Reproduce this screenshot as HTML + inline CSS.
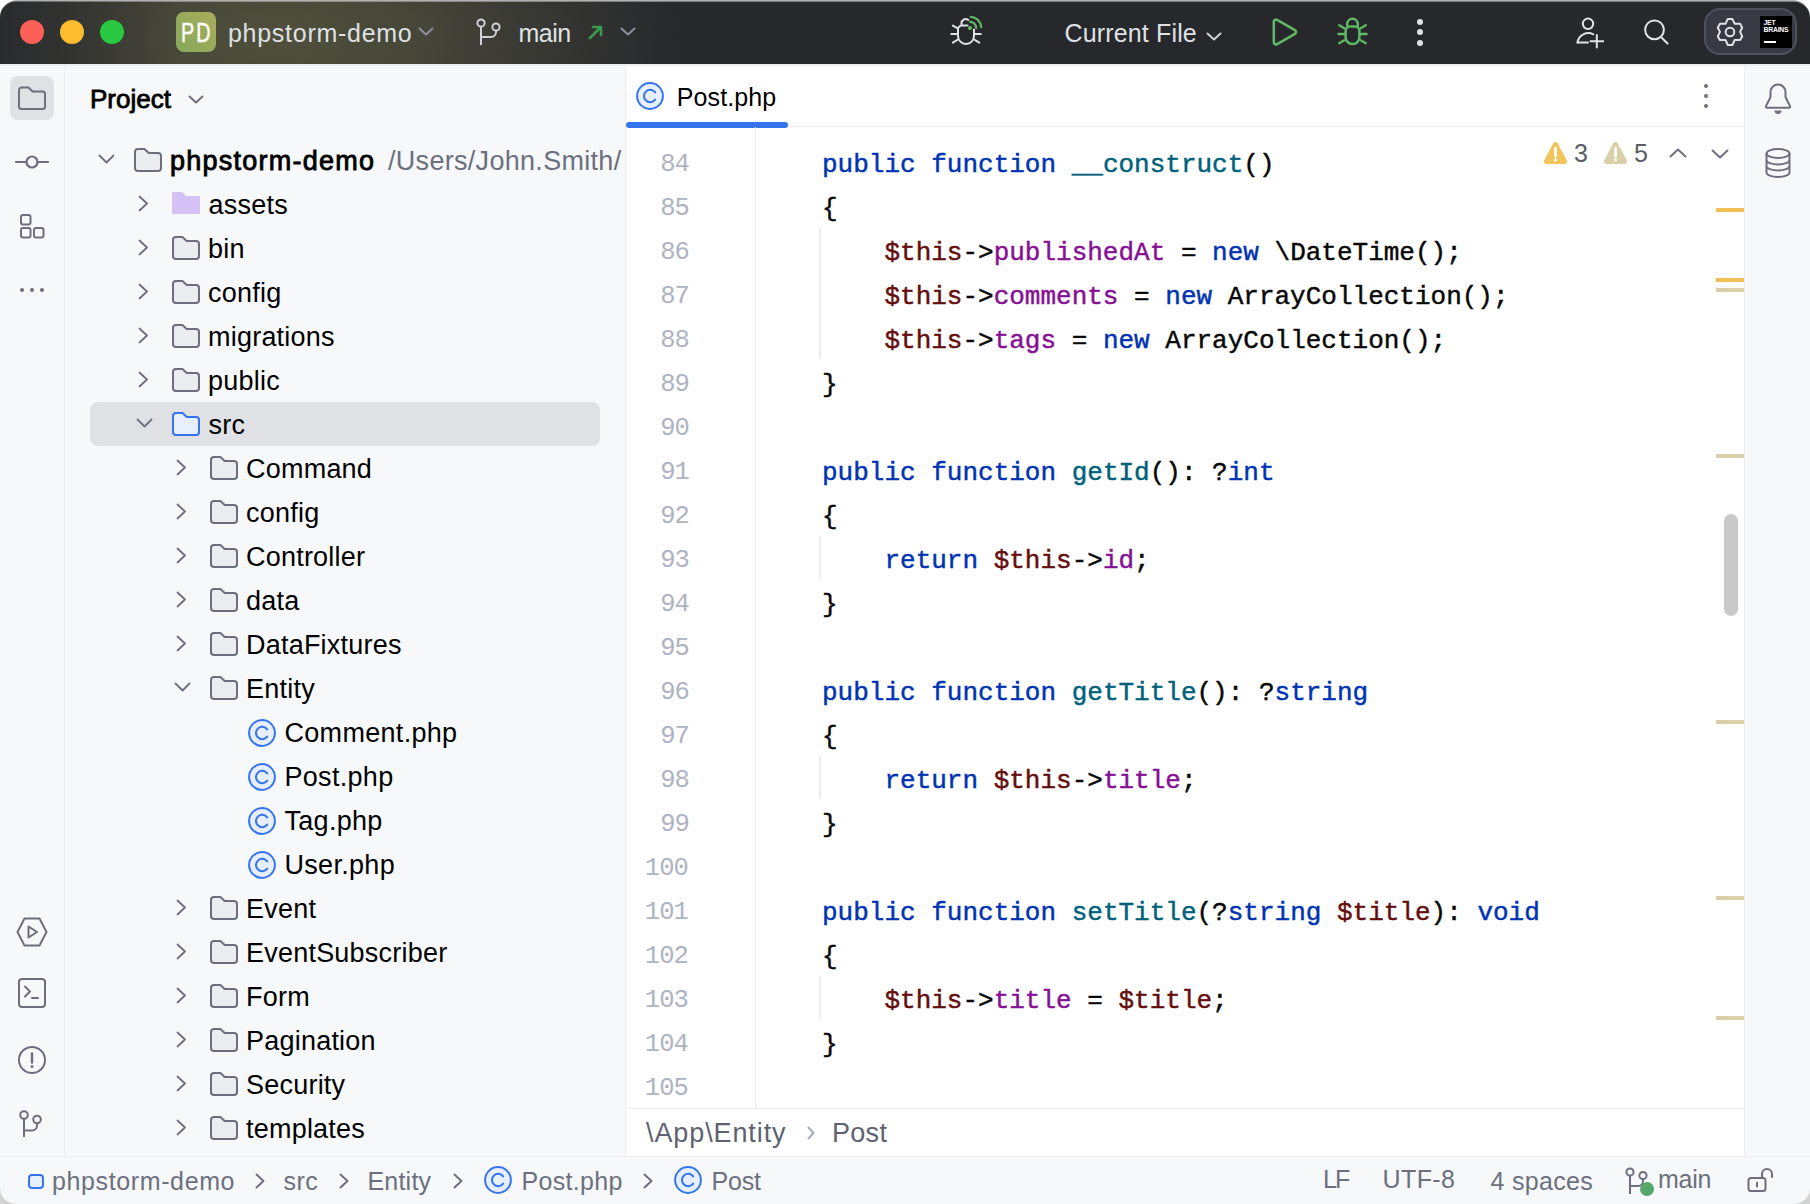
<!DOCTYPE html><html><head><meta charset="utf-8"><style>
html,body{margin:0;padding:0;}
body{width:1810px;height:1204px;overflow:hidden;position:relative;background:#c9c9c9;font-family:"Liberation Sans",sans-serif;}
.t{position:absolute;white-space:pre;line-height:1;}
.i{position:absolute;overflow:visible;}
.b{position:absolute;}
</style></head><body>
<div class="b" style="left:0;top:0;width:1810px;height:600px;background:#ffffff"></div>
<div class="b" style="left:0;top:600px;width:1810px;height:604px;background:#d3d3d3"></div>
<div class="b" style="left:0;top:0.3px;width:1810px;height:1203.7px;border-radius:17px;background:#b0b0b0"></div>
<div class="b" style="left:0;top:0;width:1810px;height:1204px;clip-path:inset(1.5px 0 0 0 round 16px);background:#f7f8fa">
<div class="b" style="left:0;top:0;width:1810px;height:64px;background:linear-gradient(90deg, rgba(39,40,44,0.75) 0px, rgba(39,40,44,0) 180px),radial-gradient(ellipse 400px 190px at 280px 38px, #4f4f3b 0%, #48483a 30%, #27282c 100%);"></div>
<div class="b" style="left:0;top:0;width:1810px;height:1px;background:#8a8b8d"></div>
<div class="b" style="left:20px;top:20px;width:24px;height:24px;border-radius:50%;background:#fe5f57"></div>
<div class="b" style="left:60px;top:20px;width:24px;height:24px;border-radius:50%;background:#febc2e"></div>
<div class="b" style="left:100px;top:20px;width:24px;height:24px;border-radius:50%;background:#28c840"></div>
<div class="b" style="left:176px;top:12px;width:40px;height:40px;border-radius:8px;background:linear-gradient(45deg,#86a95a,#a9ac5c)"></div>
<div class="t" style="left:181.2px;top:18.72px;font-size:27.5px;color:#ffffff;font-weight:normal;font-family:'Liberation Sans';letter-spacing:3px;transform:scaleX(0.72);transform-origin:0 0;-webkit-text-stroke:0.5px #fff;">PD</div>
<div class="t" style="left:228px;top:20.84px;font-size:25px;color:#dfe1e5;font-weight:normal;font-family:'Liberation Sans';letter-spacing:0.72px;">phpstorm-demo</div>
<svg class="i" style="left:418px;top:27px" width="16" height="9" viewBox="0 0 16 9" fill="none"><path d="M1.5 1.5L8.0 7.5L14.5 1.5" stroke="#8b8fa0" stroke-width="2" stroke-linecap="round" stroke-linejoin="round"/></svg>
<svg class="i" style="left:476px;top:18px" width="26" height="28" viewBox="0 0 26 28" fill="none"><circle cx="5" cy="5" r="3.6" stroke="#ced0d6" stroke-width="2"/><circle cx="20" cy="9" r="3.6" stroke="#ced0d6" stroke-width="2"/><path d="M5 8.6V27M5 19h10a5 5 0 0 0 5-5v-1.4" stroke="#ced0d6" stroke-width="2"/></svg>
<div class="t" style="left:518.5px;top:20.84px;font-size:25px;color:#dfe1e5;font-weight:normal;font-family:'Liberation Sans';letter-spacing:-0.5px;">main</div>
<svg class="i" style="left:588px;top:24px" width="16" height="16" viewBox="0 0 16 16" fill="none"><path d="M2 14L13 3M5 3h8v8" stroke="#3a9b50" stroke-width="2.6" stroke-linecap="round" stroke-linejoin="round"/></svg>
<svg class="i" style="left:620px;top:27px" width="16" height="9" viewBox="0 0 16 9" fill="none"><path d="M1.5 1.5L8.0 7.5L14.5 1.5" stroke="#8b8fa0" stroke-width="2" stroke-linecap="round" stroke-linejoin="round"/></svg>
<svg class="i" style="left:945px;top:12px" width="42" height="38" viewBox="945 12 42 38" fill="none"><path d="M974 29.5V36a8 8 0 0 1-16 0v-6a4 4 0 0 1 4-4.5h5.5" stroke="#dfe1e5" stroke-width="2" stroke-linecap="round"/><path d="M968.3 20a4.2 4.2 0 0 0-6.6 4.6" stroke="#dfe1e5" stroke-width="2" stroke-linecap="round"/><path d="M952.8 25.6l5 2.8M951.2 34h6M952.8 42.6l5-2.9M980.8 34h-6M979.3 42.6l-5-2.9" stroke="#dfe1e5" stroke-width="2" stroke-linecap="round"/><path d="M970 21.8a6.2 6.2 0 0 1 6.2 6.2M970.8 16.8a11.2 11.2 0 0 1 10.4 10.4" stroke="#5fb865" stroke-width="2.2" stroke-linecap="round"/><circle cx="970" cy="28" r="2.1" fill="#5fb865"/></svg>
<div class="t" style="left:1064.5px;top:21.34px;font-size:25px;color:#dfe1e5;font-weight:normal;font-family:'Liberation Sans';letter-spacing:0.15px;">Current File</div>
<svg class="i" style="left:1206px;top:32px" width="16" height="9" viewBox="0 0 16 9" fill="none"><path d="M1.5 1.5L8.0 7.5L14.5 1.5" stroke="#ced0d6" stroke-width="2" stroke-linecap="round" stroke-linejoin="round"/></svg>
<svg class="i" style="left:1268px;top:14px" width="34" height="36" viewBox="1268 14 34 36" fill="none"><path d="M1273.8 21.8v20.4a2.2 2.2 0 0 0 3.3 1.9l17.8-10.2a2.2 2.2 0 0 0 0-3.8l-17.8-10.2a2.2 2.2 0 0 0-3.3 1.9z" stroke="#5fb865" stroke-width="2.6" stroke-linejoin="round"/></svg>
<svg class="i" style="left:1334px;top:14px" width="36" height="36" viewBox="1334 14 36 36" fill="none"><path d="M1345.6 31a4.6 4.6 0 0 1 4.6-4.6h4.6a4.6 4.6 0 0 1 4.6 4.6v6.2a6.9 6.9 0 0 1-13.8 0z" stroke="#5fb865" stroke-width="2.5"/><path d="M1347.2 26.4v-2.3a5.3 5.3 0 0 1 10.6 0v2.3" stroke="#5fb865" stroke-width="2.5"/><path d="M1339.2 25.2l5.2 3M1338.4 34h6M1339.2 43.2l5.2-3M1365.8 25.2l-5.2 3M1366.6 34h-6M1365.8 43.2l-5.2-3" stroke="#5fb865" stroke-width="2.4" stroke-linecap="round"/></svg>
<div class="b" style="left:1417px;top:18.5px;width:6px;height:6px;border-radius:50%;background:#dfe1e5"></div>
<div class="b" style="left:1417px;top:29.200000000000003px;width:6px;height:6px;border-radius:50%;background:#dfe1e5"></div>
<div class="b" style="left:1417px;top:40px;width:6px;height:6px;border-radius:50%;background:#dfe1e5"></div>
<svg class="i" style="left:1570px;top:12px" width="40" height="42" viewBox="1570 12 40 42" fill="none"><circle cx="1588" cy="23.8" r="5.2" stroke="#dfe1e5" stroke-width="2"/><path d="M1577.5 42.5a11 11 0 0 1 15.8-8.2" stroke="#dfe1e5" stroke-width="2" stroke-linecap="round"/><path d="M1577.5 42.5h10.5M1596.8 35v12.5M1590.5 41.2h12.7" stroke="#dfe1e5" stroke-width="2" stroke-linecap="round"/></svg>
<svg class="i" style="left:1638px;top:14px" width="36" height="36" viewBox="1638 14 36 36" fill="none"><circle cx="1654.5" cy="29.8" r="9.4" stroke="#dfe1e5" stroke-width="2"/><path d="M1661 37l6.5 6.5" stroke="#dfe1e5" stroke-width="2" stroke-linecap="round"/></svg>
<div class="b" style="left:1704px;top:8px;width:89px;height:43px;border-radius:16px;background:#373a42;border:2px solid #4e5160"></div>
<svg class="i" style="left:1712px;top:14px" width="36" height="36" viewBox="1712 14 36 36" fill="none"><path d="M1727.85 18.93h4.48l2.4 4.94h5.37l2.1 3.59-2.1 4.48 2.1 4.49-2.1 3.59h-5.37l-2.4 4.93h-4.48l-2.39-4.93h-5.54l-2.09-3.59 2.09-4.49-2.09-4.48 2.09-3.59h5.54z" stroke="#dfe1e5" stroke-width="2" stroke-linejoin="round"/><circle cx="1730" cy="31.94" r="4.3" stroke="#dfe1e5" stroke-width="2"/></svg>
<div class="b" style="left:1760px;top:16px;width:32px;height:32px;background:#000"></div>
<div class="t" style="left:1763.5px;top:20.04px;font-size:6.8px;color:#fff;font-weight:bold;font-family:'Liberation Sans';letter-spacing:-0.2px;">JET</div>
<div class="t" style="left:1763.5px;top:27.24px;font-size:6.8px;color:#fff;font-weight:bold;font-family:'Liberation Sans';letter-spacing:-0.2px;">BRAINS</div>
<div class="b" style="left:1764px;top:41px;width:12px;height:2.2px;background:#fff"></div>
<div class="b" style="left:64px;top:64px;width:1px;height:1093px;background:#ebecf0"></div>
<div class="b" style="left:625px;top:64px;width:1px;height:1093px;background:#ebecf0"></div>
<div class="b" style="left:626px;top:64px;width:1118px;height:1093px;background:#ffffff"></div>
<div class="b" style="left:0;top:64px;width:1810px;height:1.5px;background:#ebecf0"></div>
<div class="b" style="left:1744px;top:64px;width:1px;height:1093px;background:#ebecf0"></div>
<div class="b" style="left:0;top:1156px;width:1810px;height:1px;background:#ebecf0"></div>
<div class="b" style="left:10px;top:76px;width:44px;height:44px;border-radius:8px;background:#dfe1e5"></div>
<svg class="i" style="left:18px;top:86px" width="28" height="24" viewBox="0 0 28 24" fill="none"><path d="M1 4a2.5 2.5 0 0 1 2.5-2.5h7l4 4H24.5A2.5 2.5 0 0 1 27 8v12.5a2.5 2.5 0 0 1-2.5 2.5h-21A2.5 2.5 0 0 1 1 20.5z" stroke="#6c707e" stroke-width="2" stroke-linejoin="round"/></svg>
<svg class="i" style="left:15px;top:155px" width="34" height="14" viewBox="0 0 34 14" fill="none"><path d="M1 7h9.5M22.5 7H33" stroke="#6c707e" stroke-width="2.2" stroke-linecap="round"/><circle cx="17" cy="7" r="5.5" stroke="#6c707e" stroke-width="2.2"/></svg>
<svg class="i" style="left:19px;top:213px" width="27" height="27" viewBox="0 0 27 27" fill="none"><rect x="2" y="2" width="9.5" height="9.5" rx="2" stroke="#6c707e" stroke-width="2"/><rect x="2" y="15" width="9.5" height="9.5" rx="2" stroke="#6c707e" stroke-width="2"/><rect x="15" y="15" width="9.5" height="9.5" rx="2" stroke="#6c707e" stroke-width="2"/></svg>
<div class="b" style="left:19.8px;top:287.8px;width:4.4px;height:4.4px;border-radius:50%;background:#6c707e"></div>
<div class="b" style="left:29.8px;top:287.8px;width:4.4px;height:4.4px;border-radius:50%;background:#6c707e"></div>
<div class="b" style="left:39.8px;top:287.8px;width:4.4px;height:4.4px;border-radius:50%;background:#6c707e"></div>
<svg class="i" style="left:16px;top:917px" width="32" height="30" viewBox="0 0 32 30" fill="none"><path d="M8.5 1.5h15l7 13.5-7 13.5h-15L1.5 15z" stroke="#6c707e" stroke-width="2" stroke-linejoin="round"/><path d="M12.5 9.5v11l8.5-5.5z" stroke="#6c707e" stroke-width="2" stroke-linejoin="round"/></svg>
<svg class="i" style="left:18px;top:978px" width="28" height="30" viewBox="0 0 28 30" fill="none"><rect x="1" y="1" width="26" height="28" rx="3" stroke="#6c707e" stroke-width="2"/><path d="M7 8.5l5 5-5 5M14 20h6" stroke="#6c707e" stroke-width="2" stroke-linecap="round" stroke-linejoin="round"/></svg>
<svg class="i" style="left:18px;top:1046px" width="28" height="28" viewBox="0 0 28 28" fill="none"><circle cx="14" cy="14" r="13" stroke="#6c707e" stroke-width="2"/><path d="M14 7.5v9" stroke="#6c707e" stroke-width="2.4" stroke-linecap="round"/><circle cx="14" cy="20.5" r="1.5" fill="#6c707e"/></svg>
<svg class="i" style="left:19px;top:1110px" width="24" height="28" viewBox="0 0 24 28" fill="none"><circle cx="5" cy="5" r="3.8" stroke="#6c707e" stroke-width="2"/><circle cx="18" cy="9.5" r="3.8" stroke="#6c707e" stroke-width="2"/><path d="M5 8.8V27M5 20.5h8a5 5 0 0 0 5-5v-2.2" stroke="#6c707e" stroke-width="2"/></svg>
<div class="t" style="left:90px;top:85.99px;font-size:26px;color:#000000;font-weight:normal;font-family:'Liberation Sans';-webkit-text-stroke:0.8px #000;">Project</div>
<svg class="i" style="left:188px;top:95px" width="16" height="9" viewBox="0 0 16 9" fill="none"><path d="M1.5 1.5L8.0 7.5L14.5 1.5" stroke="#6c707e" stroke-width="2" stroke-linecap="round" stroke-linejoin="round"/></svg>
<div class="b" style="left:90px;top:402px;width:510px;height:44px;border-radius:8px;background:#dfe1e5"></div>
<svg class="i" style="left:98px;top:154px" width="17" height="10" viewBox="0 0 17 10" fill="none"><path d="M1.5 1.5L8.5 8.5L15.5 1.5" stroke="#6c707e" stroke-width="1.8" stroke-linecap="round" stroke-linejoin="round"/></svg>
<svg class="i" style="left:134px;top:148px" width="28" height="24" viewBox="0 0 28 24" fill="none"><path d="M1 4a3 3 0 0 1 3-3h6.5l4.2 4H24a3 3 0 0 1 3 3v12a3 3 0 0 1-3 3H4a3 3 0 0 1-3-3z" fill="#ebecf0" stroke="#6c707e" stroke-width="2" stroke-linejoin="round"/></svg>
<div class="t" style="left:170px;top:147.94px;font-size:27px;color:#000;font-weight:normal;font-family:'Liberation Sans';letter-spacing:1.25px;-webkit-text-stroke:0.85px #000;">phpstorm-demo</div>
<div class="t" style="left:388px;top:147.94px;font-size:27px;color:#6c707e;font-weight:normal;font-family:'Liberation Sans';letter-spacing:0.3px;">/Users/John.Smith/</div>
<svg class="i" style="left:138px;top:195px" width="11" height="17" viewBox="0 0 11 17" fill="none"><path d="M1.5 1.5L9 8.5L1.5 15.5" stroke="#6c707e" stroke-width="1.8" stroke-linecap="round" stroke-linejoin="round"/></svg>
<svg class="i" style="left:172px;top:192px" width="28" height="22" viewBox="0 0 28 22" fill="none"><path d="M0 0h10l4 4h14v18H0z" fill="#d4c2f6"/></svg>
<div class="t" style="left:208.5px;top:191.94px;font-size:27px;color:#000;font-weight:normal;font-family:'Liberation Sans';letter-spacing:0.22px;">assets</div>
<svg class="i" style="left:138px;top:239px" width="11" height="17" viewBox="0 0 11 17" fill="none"><path d="M1.5 1.5L9 8.5L1.5 15.5" stroke="#6c707e" stroke-width="1.8" stroke-linecap="round" stroke-linejoin="round"/></svg>
<svg class="i" style="left:172px;top:236px" width="28" height="24" viewBox="0 0 28 24" fill="none"><path d="M1 4a3 3 0 0 1 3-3h6.5l4.2 4H24a3 3 0 0 1 3 3v12a3 3 0 0 1-3 3H4a3 3 0 0 1-3-3z" fill="#ebecf0" stroke="#6c707e" stroke-width="2" stroke-linejoin="round"/></svg>
<div class="t" style="left:208px;top:235.94px;font-size:27px;color:#000;font-weight:normal;font-family:'Liberation Sans';letter-spacing:0.22px;">bin</div>
<svg class="i" style="left:138px;top:283px" width="11" height="17" viewBox="0 0 11 17" fill="none"><path d="M1.5 1.5L9 8.5L1.5 15.5" stroke="#6c707e" stroke-width="1.8" stroke-linecap="round" stroke-linejoin="round"/></svg>
<svg class="i" style="left:172px;top:280px" width="28" height="24" viewBox="0 0 28 24" fill="none"><path d="M1 4a3 3 0 0 1 3-3h6.5l4.2 4H24a3 3 0 0 1 3 3v12a3 3 0 0 1-3 3H4a3 3 0 0 1-3-3z" fill="#ebecf0" stroke="#6c707e" stroke-width="2" stroke-linejoin="round"/></svg>
<div class="t" style="left:208px;top:279.94px;font-size:27px;color:#000;font-weight:normal;font-family:'Liberation Sans';letter-spacing:0.22px;">config</div>
<svg class="i" style="left:138px;top:327px" width="11" height="17" viewBox="0 0 11 17" fill="none"><path d="M1.5 1.5L9 8.5L1.5 15.5" stroke="#6c707e" stroke-width="1.8" stroke-linecap="round" stroke-linejoin="round"/></svg>
<svg class="i" style="left:172px;top:324px" width="28" height="24" viewBox="0 0 28 24" fill="none"><path d="M1 4a3 3 0 0 1 3-3h6.5l4.2 4H24a3 3 0 0 1 3 3v12a3 3 0 0 1-3 3H4a3 3 0 0 1-3-3z" fill="#ebecf0" stroke="#6c707e" stroke-width="2" stroke-linejoin="round"/></svg>
<div class="t" style="left:208px;top:323.94px;font-size:27px;color:#000;font-weight:normal;font-family:'Liberation Sans';letter-spacing:0.22px;">migrations</div>
<svg class="i" style="left:138px;top:371px" width="11" height="17" viewBox="0 0 11 17" fill="none"><path d="M1.5 1.5L9 8.5L1.5 15.5" stroke="#6c707e" stroke-width="1.8" stroke-linecap="round" stroke-linejoin="round"/></svg>
<svg class="i" style="left:172px;top:368px" width="28" height="24" viewBox="0 0 28 24" fill="none"><path d="M1 4a3 3 0 0 1 3-3h6.5l4.2 4H24a3 3 0 0 1 3 3v12a3 3 0 0 1-3 3H4a3 3 0 0 1-3-3z" fill="#ebecf0" stroke="#6c707e" stroke-width="2" stroke-linejoin="round"/></svg>
<div class="t" style="left:208px;top:367.94px;font-size:27px;color:#000;font-weight:normal;font-family:'Liberation Sans';letter-spacing:0.22px;">public</div>
<svg class="i" style="left:136px;top:418px" width="17" height="10" viewBox="0 0 17 10" fill="none"><path d="M1.5 1.5L8.5 8.5L15.5 1.5" stroke="#6c707e" stroke-width="1.8" stroke-linecap="round" stroke-linejoin="round"/></svg>
<svg class="i" style="left:172px;top:412px" width="28" height="24" viewBox="0 0 28 24" fill="none"><path d="M1 4a3 3 0 0 1 3-3h6.5l4.2 4H24a3 3 0 0 1 3 3v12a3 3 0 0 1-3 3H4a3 3 0 0 1-3-3z" fill="#e7effd" stroke="#3574f0" stroke-width="2" stroke-linejoin="round"/></svg>
<div class="t" style="left:208.5px;top:411.94px;font-size:27px;color:#000;font-weight:normal;font-family:'Liberation Sans';letter-spacing:0.22px;">src</div>
<svg class="i" style="left:176px;top:459px" width="11" height="17" viewBox="0 0 11 17" fill="none"><path d="M1.5 1.5L9 8.5L1.5 15.5" stroke="#6c707e" stroke-width="1.8" stroke-linecap="round" stroke-linejoin="round"/></svg>
<svg class="i" style="left:210px;top:456px" width="28" height="24" viewBox="0 0 28 24" fill="none"><path d="M1 4a3 3 0 0 1 3-3h6.5l4.2 4H24a3 3 0 0 1 3 3v12a3 3 0 0 1-3 3H4a3 3 0 0 1-3-3z" fill="#ebecf0" stroke="#6c707e" stroke-width="2" stroke-linejoin="round"/></svg>
<div class="t" style="left:246px;top:455.94px;font-size:27px;color:#000;font-weight:normal;font-family:'Liberation Sans';letter-spacing:0.22px;">Command</div>
<svg class="i" style="left:176px;top:503px" width="11" height="17" viewBox="0 0 11 17" fill="none"><path d="M1.5 1.5L9 8.5L1.5 15.5" stroke="#6c707e" stroke-width="1.8" stroke-linecap="round" stroke-linejoin="round"/></svg>
<svg class="i" style="left:210px;top:500px" width="28" height="24" viewBox="0 0 28 24" fill="none"><path d="M1 4a3 3 0 0 1 3-3h6.5l4.2 4H24a3 3 0 0 1 3 3v12a3 3 0 0 1-3 3H4a3 3 0 0 1-3-3z" fill="#ebecf0" stroke="#6c707e" stroke-width="2" stroke-linejoin="round"/></svg>
<div class="t" style="left:246px;top:499.94px;font-size:27px;color:#000;font-weight:normal;font-family:'Liberation Sans';letter-spacing:0.22px;">config</div>
<svg class="i" style="left:176px;top:547px" width="11" height="17" viewBox="0 0 11 17" fill="none"><path d="M1.5 1.5L9 8.5L1.5 15.5" stroke="#6c707e" stroke-width="1.8" stroke-linecap="round" stroke-linejoin="round"/></svg>
<svg class="i" style="left:210px;top:544px" width="28" height="24" viewBox="0 0 28 24" fill="none"><path d="M1 4a3 3 0 0 1 3-3h6.5l4.2 4H24a3 3 0 0 1 3 3v12a3 3 0 0 1-3 3H4a3 3 0 0 1-3-3z" fill="#ebecf0" stroke="#6c707e" stroke-width="2" stroke-linejoin="round"/></svg>
<div class="t" style="left:246px;top:543.94px;font-size:27px;color:#000;font-weight:normal;font-family:'Liberation Sans';letter-spacing:0.22px;">Controller</div>
<svg class="i" style="left:176px;top:591px" width="11" height="17" viewBox="0 0 11 17" fill="none"><path d="M1.5 1.5L9 8.5L1.5 15.5" stroke="#6c707e" stroke-width="1.8" stroke-linecap="round" stroke-linejoin="round"/></svg>
<svg class="i" style="left:210px;top:588px" width="28" height="24" viewBox="0 0 28 24" fill="none"><path d="M1 4a3 3 0 0 1 3-3h6.5l4.2 4H24a3 3 0 0 1 3 3v12a3 3 0 0 1-3 3H4a3 3 0 0 1-3-3z" fill="#ebecf0" stroke="#6c707e" stroke-width="2" stroke-linejoin="round"/></svg>
<div class="t" style="left:246px;top:587.94px;font-size:27px;color:#000;font-weight:normal;font-family:'Liberation Sans';letter-spacing:0.22px;">data</div>
<svg class="i" style="left:176px;top:635px" width="11" height="17" viewBox="0 0 11 17" fill="none"><path d="M1.5 1.5L9 8.5L1.5 15.5" stroke="#6c707e" stroke-width="1.8" stroke-linecap="round" stroke-linejoin="round"/></svg>
<svg class="i" style="left:210px;top:632px" width="28" height="24" viewBox="0 0 28 24" fill="none"><path d="M1 4a3 3 0 0 1 3-3h6.5l4.2 4H24a3 3 0 0 1 3 3v12a3 3 0 0 1-3 3H4a3 3 0 0 1-3-3z" fill="#ebecf0" stroke="#6c707e" stroke-width="2" stroke-linejoin="round"/></svg>
<div class="t" style="left:246px;top:631.94px;font-size:27px;color:#000;font-weight:normal;font-family:'Liberation Sans';letter-spacing:0.22px;">DataFixtures</div>
<svg class="i" style="left:174px;top:682px" width="17" height="10" viewBox="0 0 17 10" fill="none"><path d="M1.5 1.5L8.5 8.5L15.5 1.5" stroke="#6c707e" stroke-width="1.8" stroke-linecap="round" stroke-linejoin="round"/></svg>
<svg class="i" style="left:210px;top:676px" width="28" height="24" viewBox="0 0 28 24" fill="none"><path d="M1 4a3 3 0 0 1 3-3h6.5l4.2 4H24a3 3 0 0 1 3 3v12a3 3 0 0 1-3 3H4a3 3 0 0 1-3-3z" fill="#ebecf0" stroke="#6c707e" stroke-width="2" stroke-linejoin="round"/></svg>
<div class="t" style="left:246px;top:675.94px;font-size:27px;color:#000;font-weight:normal;font-family:'Liberation Sans';letter-spacing:0.22px;">Entity</div>
<svg class="i" style="left:248px;top:719px" width="28" height="28" viewBox="0 0 28 28" fill="none"><circle cx="14" cy="14" r="12.9" fill="#e7effd" stroke="#3574f0" stroke-width="2"/><path d="M19.2 10.4A6.2 6.2 0 1 0 19.2 17.6" stroke="#3574f0" stroke-width="2" stroke-linecap="round"/></svg>
<div class="t" style="left:284.5px;top:719.94px;font-size:27px;color:#000;font-weight:normal;font-family:'Liberation Sans';letter-spacing:0.3px;">Comment.php</div>
<svg class="i" style="left:248px;top:763px" width="28" height="28" viewBox="0 0 28 28" fill="none"><circle cx="14" cy="14" r="12.9" fill="#e7effd" stroke="#3574f0" stroke-width="2"/><path d="M19.2 10.4A6.2 6.2 0 1 0 19.2 17.6" stroke="#3574f0" stroke-width="2" stroke-linecap="round"/></svg>
<div class="t" style="left:284.5px;top:763.94px;font-size:27px;color:#000;font-weight:normal;font-family:'Liberation Sans';letter-spacing:0.3px;">Post.php</div>
<svg class="i" style="left:248px;top:807px" width="28" height="28" viewBox="0 0 28 28" fill="none"><circle cx="14" cy="14" r="12.9" fill="#e7effd" stroke="#3574f0" stroke-width="2"/><path d="M19.2 10.4A6.2 6.2 0 1 0 19.2 17.6" stroke="#3574f0" stroke-width="2" stroke-linecap="round"/></svg>
<div class="t" style="left:284.5px;top:807.94px;font-size:27px;color:#000;font-weight:normal;font-family:'Liberation Sans';letter-spacing:0.3px;">Tag.php</div>
<svg class="i" style="left:248px;top:851px" width="28" height="28" viewBox="0 0 28 28" fill="none"><circle cx="14" cy="14" r="12.9" fill="#e7effd" stroke="#3574f0" stroke-width="2"/><path d="M19.2 10.4A6.2 6.2 0 1 0 19.2 17.6" stroke="#3574f0" stroke-width="2" stroke-linecap="round"/></svg>
<div class="t" style="left:284.5px;top:851.94px;font-size:27px;color:#000;font-weight:normal;font-family:'Liberation Sans';letter-spacing:0.3px;">User.php</div>
<svg class="i" style="left:176px;top:899px" width="11" height="17" viewBox="0 0 11 17" fill="none"><path d="M1.5 1.5L9 8.5L1.5 15.5" stroke="#6c707e" stroke-width="1.8" stroke-linecap="round" stroke-linejoin="round"/></svg>
<svg class="i" style="left:210px;top:896px" width="28" height="24" viewBox="0 0 28 24" fill="none"><path d="M1 4a3 3 0 0 1 3-3h6.5l4.2 4H24a3 3 0 0 1 3 3v12a3 3 0 0 1-3 3H4a3 3 0 0 1-3-3z" fill="#ebecf0" stroke="#6c707e" stroke-width="2" stroke-linejoin="round"/></svg>
<div class="t" style="left:246px;top:895.94px;font-size:27px;color:#000;font-weight:normal;font-family:'Liberation Sans';letter-spacing:0.22px;">Event</div>
<svg class="i" style="left:176px;top:943px" width="11" height="17" viewBox="0 0 11 17" fill="none"><path d="M1.5 1.5L9 8.5L1.5 15.5" stroke="#6c707e" stroke-width="1.8" stroke-linecap="round" stroke-linejoin="round"/></svg>
<svg class="i" style="left:210px;top:940px" width="28" height="24" viewBox="0 0 28 24" fill="none"><path d="M1 4a3 3 0 0 1 3-3h6.5l4.2 4H24a3 3 0 0 1 3 3v12a3 3 0 0 1-3 3H4a3 3 0 0 1-3-3z" fill="#ebecf0" stroke="#6c707e" stroke-width="2" stroke-linejoin="round"/></svg>
<div class="t" style="left:246px;top:939.94px;font-size:27px;color:#000;font-weight:normal;font-family:'Liberation Sans';letter-spacing:0.22px;">EventSubscriber</div>
<svg class="i" style="left:176px;top:987px" width="11" height="17" viewBox="0 0 11 17" fill="none"><path d="M1.5 1.5L9 8.5L1.5 15.5" stroke="#6c707e" stroke-width="1.8" stroke-linecap="round" stroke-linejoin="round"/></svg>
<svg class="i" style="left:210px;top:984px" width="28" height="24" viewBox="0 0 28 24" fill="none"><path d="M1 4a3 3 0 0 1 3-3h6.5l4.2 4H24a3 3 0 0 1 3 3v12a3 3 0 0 1-3 3H4a3 3 0 0 1-3-3z" fill="#ebecf0" stroke="#6c707e" stroke-width="2" stroke-linejoin="round"/></svg>
<div class="t" style="left:246px;top:983.94px;font-size:27px;color:#000;font-weight:normal;font-family:'Liberation Sans';letter-spacing:0.22px;">Form</div>
<svg class="i" style="left:176px;top:1031px" width="11" height="17" viewBox="0 0 11 17" fill="none"><path d="M1.5 1.5L9 8.5L1.5 15.5" stroke="#6c707e" stroke-width="1.8" stroke-linecap="round" stroke-linejoin="round"/></svg>
<svg class="i" style="left:210px;top:1028px" width="28" height="24" viewBox="0 0 28 24" fill="none"><path d="M1 4a3 3 0 0 1 3-3h6.5l4.2 4H24a3 3 0 0 1 3 3v12a3 3 0 0 1-3 3H4a3 3 0 0 1-3-3z" fill="#ebecf0" stroke="#6c707e" stroke-width="2" stroke-linejoin="round"/></svg>
<div class="t" style="left:246px;top:1027.94px;font-size:27px;color:#000;font-weight:normal;font-family:'Liberation Sans';letter-spacing:0.22px;">Pagination</div>
<svg class="i" style="left:176px;top:1075px" width="11" height="17" viewBox="0 0 11 17" fill="none"><path d="M1.5 1.5L9 8.5L1.5 15.5" stroke="#6c707e" stroke-width="1.8" stroke-linecap="round" stroke-linejoin="round"/></svg>
<svg class="i" style="left:210px;top:1072px" width="28" height="24" viewBox="0 0 28 24" fill="none"><path d="M1 4a3 3 0 0 1 3-3h6.5l4.2 4H24a3 3 0 0 1 3 3v12a3 3 0 0 1-3 3H4a3 3 0 0 1-3-3z" fill="#ebecf0" stroke="#6c707e" stroke-width="2" stroke-linejoin="round"/></svg>
<div class="t" style="left:246px;top:1071.94px;font-size:27px;color:#000;font-weight:normal;font-family:'Liberation Sans';letter-spacing:0.22px;">Security</div>
<svg class="i" style="left:176px;top:1119px" width="11" height="17" viewBox="0 0 11 17" fill="none"><path d="M1.5 1.5L9 8.5L1.5 15.5" stroke="#6c707e" stroke-width="1.8" stroke-linecap="round" stroke-linejoin="round"/></svg>
<svg class="i" style="left:210px;top:1116px" width="28" height="24" viewBox="0 0 28 24" fill="none"><path d="M1 4a3 3 0 0 1 3-3h6.5l4.2 4H24a3 3 0 0 1 3 3v12a3 3 0 0 1-3 3H4a3 3 0 0 1-3-3z" fill="#ebecf0" stroke="#6c707e" stroke-width="2" stroke-linejoin="round"/></svg>
<div class="t" style="left:246px;top:1115.94px;font-size:27px;color:#000;font-weight:normal;font-family:'Liberation Sans';letter-spacing:0.22px;">templates</div>
<div class="b" style="left:626px;top:126px;width:1118px;height:1px;background:#ebecf0"></div>
<svg class="i" style="left:636px;top:82px" width="28" height="28" viewBox="0 0 28 28" fill="none"><circle cx="14" cy="14" r="12.9" fill="#e7effd" stroke="#3574f0" stroke-width="2"/><path d="M19.2 10.4A6.2 6.2 0 1 0 19.2 17.6" stroke="#3574f0" stroke-width="2" stroke-linecap="round"/></svg>
<div class="t" style="left:676.8px;top:84.84px;font-size:25px;color:#000;font-weight:normal;font-family:'Liberation Sans';letter-spacing:0.1px;">Post.php</div>
<div class="b" style="left:626px;top:122px;width:162px;height:6px;border-radius:3px;background:#3574f0"></div>
<div class="b" style="left:1703.8px;top:83.8px;width:4.4px;height:4.4px;border-radius:50%;background:#6c707e"></div>
<div class="b" style="left:1703.8px;top:93.8px;width:4.4px;height:4.4px;border-radius:50%;background:#6c707e"></div>
<div class="b" style="left:1703.8px;top:103.8px;width:4.4px;height:4.4px;border-radius:50%;background:#6c707e"></div>
<div class="b" style="left:755px;top:127px;width:1px;height:981px;background:#ebecf0"></div>
<div class="b" style="left:626px;top:1108px;width:1118px;height:1px;background:#ebecf0"></div>
<div class="t" style="left:660.2px;top:152.45px;font-size:25.5px;color:#aeb3c2;font-weight:normal;font-family:'Liberation Mono';letter-spacing:-0.9px;">84</div>
<div class="t" style="left:759.6px;top:152.07px;font-size:26px;color:#080808;font-weight:normal;font-family:'Liberation Mono';-webkit-text-stroke:0.45px currentColor;"><span style="color:#080808;-webkit-text-stroke:0.45px #080808">    </span><span style="color:#0033b3;-webkit-text-stroke:0.45px #0033b3">public</span><span style="color:#080808;-webkit-text-stroke:0.45px #080808"> </span><span style="color:#0033b3;-webkit-text-stroke:0.45px #0033b3">function</span><span style="color:#080808;-webkit-text-stroke:0.45px #080808"> </span><span style="color:#00627a;-webkit-text-stroke:0.45px #00627a">__construct</span><span style="color:#080808;-webkit-text-stroke:0.45px #080808">()</span></div>
<div class="t" style="left:660.2px;top:196.45px;font-size:25.5px;color:#aeb3c2;font-weight:normal;font-family:'Liberation Mono';letter-spacing:-0.9px;">85</div>
<div class="t" style="left:759.6px;top:196.07px;font-size:26px;color:#080808;font-weight:normal;font-family:'Liberation Mono';-webkit-text-stroke:0.45px currentColor;"><span style="color:#080808;-webkit-text-stroke:0.45px #080808">    {</span></div>
<div class="t" style="left:660.2px;top:240.45px;font-size:25.5px;color:#aeb3c2;font-weight:normal;font-family:'Liberation Mono';letter-spacing:-0.9px;">86</div>
<div class="t" style="left:759.6px;top:240.07px;font-size:26px;color:#080808;font-weight:normal;font-family:'Liberation Mono';-webkit-text-stroke:0.45px currentColor;"><span style="color:#080808;-webkit-text-stroke:0.45px #080808">        </span><span style="color:#660e0e;-webkit-text-stroke:0.45px #660e0e">$this</span><span style="color:#080808;-webkit-text-stroke:0.45px #080808">-&gt;</span><span style="color:#871094;-webkit-text-stroke:0.45px #871094">publishedAt</span><span style="color:#080808;-webkit-text-stroke:0.45px #080808"> = </span><span style="color:#0033b3;-webkit-text-stroke:0.45px #0033b3">new</span><span style="color:#080808;-webkit-text-stroke:0.45px #080808"> \DateTime();</span></div>
<div class="t" style="left:660.2px;top:284.45px;font-size:25.5px;color:#aeb3c2;font-weight:normal;font-family:'Liberation Mono';letter-spacing:-0.9px;">87</div>
<div class="t" style="left:759.6px;top:284.07px;font-size:26px;color:#080808;font-weight:normal;font-family:'Liberation Mono';-webkit-text-stroke:0.45px currentColor;"><span style="color:#080808;-webkit-text-stroke:0.45px #080808">        </span><span style="color:#660e0e;-webkit-text-stroke:0.45px #660e0e">$this</span><span style="color:#080808;-webkit-text-stroke:0.45px #080808">-&gt;</span><span style="color:#871094;-webkit-text-stroke:0.45px #871094">comments</span><span style="color:#080808;-webkit-text-stroke:0.45px #080808"> = </span><span style="color:#0033b3;-webkit-text-stroke:0.45px #0033b3">new</span><span style="color:#080808;-webkit-text-stroke:0.45px #080808"> ArrayCollection();</span></div>
<div class="t" style="left:660.2px;top:328.45px;font-size:25.5px;color:#aeb3c2;font-weight:normal;font-family:'Liberation Mono';letter-spacing:-0.9px;">88</div>
<div class="t" style="left:759.6px;top:328.07px;font-size:26px;color:#080808;font-weight:normal;font-family:'Liberation Mono';-webkit-text-stroke:0.45px currentColor;"><span style="color:#080808;-webkit-text-stroke:0.45px #080808">        </span><span style="color:#660e0e;-webkit-text-stroke:0.45px #660e0e">$this</span><span style="color:#080808;-webkit-text-stroke:0.45px #080808">-&gt;</span><span style="color:#871094;-webkit-text-stroke:0.45px #871094">tags</span><span style="color:#080808;-webkit-text-stroke:0.45px #080808"> = </span><span style="color:#0033b3;-webkit-text-stroke:0.45px #0033b3">new</span><span style="color:#080808;-webkit-text-stroke:0.45px #080808"> ArrayCollection();</span></div>
<div class="t" style="left:660.2px;top:372.45px;font-size:25.5px;color:#aeb3c2;font-weight:normal;font-family:'Liberation Mono';letter-spacing:-0.9px;">89</div>
<div class="t" style="left:759.6px;top:372.07px;font-size:26px;color:#080808;font-weight:normal;font-family:'Liberation Mono';-webkit-text-stroke:0.45px currentColor;"><span style="color:#080808;-webkit-text-stroke:0.45px #080808">    }</span></div>
<div class="t" style="left:660.2px;top:416.45px;font-size:25.5px;color:#aeb3c2;font-weight:normal;font-family:'Liberation Mono';letter-spacing:-0.9px;">90</div>
<div class="t" style="left:660.2px;top:460.45px;font-size:25.5px;color:#aeb3c2;font-weight:normal;font-family:'Liberation Mono';letter-spacing:-0.9px;">91</div>
<div class="t" style="left:759.6px;top:460.07px;font-size:26px;color:#080808;font-weight:normal;font-family:'Liberation Mono';-webkit-text-stroke:0.45px currentColor;"><span style="color:#080808;-webkit-text-stroke:0.45px #080808">    </span><span style="color:#0033b3;-webkit-text-stroke:0.45px #0033b3">public</span><span style="color:#080808;-webkit-text-stroke:0.45px #080808"> </span><span style="color:#0033b3;-webkit-text-stroke:0.45px #0033b3">function</span><span style="color:#080808;-webkit-text-stroke:0.45px #080808"> </span><span style="color:#00627a;-webkit-text-stroke:0.45px #00627a">getId</span><span style="color:#080808;-webkit-text-stroke:0.45px #080808">(): ?</span><span style="color:#0033b3;-webkit-text-stroke:0.45px #0033b3">int</span></div>
<div class="t" style="left:660.2px;top:504.45px;font-size:25.5px;color:#aeb3c2;font-weight:normal;font-family:'Liberation Mono';letter-spacing:-0.9px;">92</div>
<div class="t" style="left:759.6px;top:504.07px;font-size:26px;color:#080808;font-weight:normal;font-family:'Liberation Mono';-webkit-text-stroke:0.45px currentColor;"><span style="color:#080808;-webkit-text-stroke:0.45px #080808">    {</span></div>
<div class="t" style="left:660.2px;top:548.45px;font-size:25.5px;color:#aeb3c2;font-weight:normal;font-family:'Liberation Mono';letter-spacing:-0.9px;">93</div>
<div class="t" style="left:759.6px;top:548.07px;font-size:26px;color:#080808;font-weight:normal;font-family:'Liberation Mono';-webkit-text-stroke:0.45px currentColor;"><span style="color:#080808;-webkit-text-stroke:0.45px #080808">        </span><span style="color:#0033b3;-webkit-text-stroke:0.45px #0033b3">return</span><span style="color:#080808;-webkit-text-stroke:0.45px #080808"> </span><span style="color:#660e0e;-webkit-text-stroke:0.45px #660e0e">$this</span><span style="color:#080808;-webkit-text-stroke:0.45px #080808">-&gt;</span><span style="color:#871094;-webkit-text-stroke:0.45px #871094">id</span><span style="color:#080808;-webkit-text-stroke:0.45px #080808">;</span></div>
<div class="t" style="left:660.2px;top:592.45px;font-size:25.5px;color:#aeb3c2;font-weight:normal;font-family:'Liberation Mono';letter-spacing:-0.9px;">94</div>
<div class="t" style="left:759.6px;top:592.07px;font-size:26px;color:#080808;font-weight:normal;font-family:'Liberation Mono';-webkit-text-stroke:0.45px currentColor;"><span style="color:#080808;-webkit-text-stroke:0.45px #080808">    }</span></div>
<div class="t" style="left:660.2px;top:636.45px;font-size:25.5px;color:#aeb3c2;font-weight:normal;font-family:'Liberation Mono';letter-spacing:-0.9px;">95</div>
<div class="t" style="left:660.2px;top:680.45px;font-size:25.5px;color:#aeb3c2;font-weight:normal;font-family:'Liberation Mono';letter-spacing:-0.9px;">96</div>
<div class="t" style="left:759.6px;top:680.07px;font-size:26px;color:#080808;font-weight:normal;font-family:'Liberation Mono';-webkit-text-stroke:0.45px currentColor;"><span style="color:#080808;-webkit-text-stroke:0.45px #080808">    </span><span style="color:#0033b3;-webkit-text-stroke:0.45px #0033b3">public</span><span style="color:#080808;-webkit-text-stroke:0.45px #080808"> </span><span style="color:#0033b3;-webkit-text-stroke:0.45px #0033b3">function</span><span style="color:#080808;-webkit-text-stroke:0.45px #080808"> </span><span style="color:#00627a;-webkit-text-stroke:0.45px #00627a">getTitle</span><span style="color:#080808;-webkit-text-stroke:0.45px #080808">(): ?</span><span style="color:#0033b3;-webkit-text-stroke:0.45px #0033b3">string</span></div>
<div class="t" style="left:660.2px;top:724.45px;font-size:25.5px;color:#aeb3c2;font-weight:normal;font-family:'Liberation Mono';letter-spacing:-0.9px;">97</div>
<div class="t" style="left:759.6px;top:724.07px;font-size:26px;color:#080808;font-weight:normal;font-family:'Liberation Mono';-webkit-text-stroke:0.45px currentColor;"><span style="color:#080808;-webkit-text-stroke:0.45px #080808">    {</span></div>
<div class="t" style="left:660.2px;top:768.45px;font-size:25.5px;color:#aeb3c2;font-weight:normal;font-family:'Liberation Mono';letter-spacing:-0.9px;">98</div>
<div class="t" style="left:759.6px;top:768.07px;font-size:26px;color:#080808;font-weight:normal;font-family:'Liberation Mono';-webkit-text-stroke:0.45px currentColor;"><span style="color:#080808;-webkit-text-stroke:0.45px #080808">        </span><span style="color:#0033b3;-webkit-text-stroke:0.45px #0033b3">return</span><span style="color:#080808;-webkit-text-stroke:0.45px #080808"> </span><span style="color:#660e0e;-webkit-text-stroke:0.45px #660e0e">$this</span><span style="color:#080808;-webkit-text-stroke:0.45px #080808">-&gt;</span><span style="color:#871094;-webkit-text-stroke:0.45px #871094">title</span><span style="color:#080808;-webkit-text-stroke:0.45px #080808">;</span></div>
<div class="t" style="left:660.2px;top:812.45px;font-size:25.5px;color:#aeb3c2;font-weight:normal;font-family:'Liberation Mono';letter-spacing:-0.9px;">99</div>
<div class="t" style="left:759.6px;top:812.07px;font-size:26px;color:#080808;font-weight:normal;font-family:'Liberation Mono';-webkit-text-stroke:0.45px currentColor;"><span style="color:#080808;-webkit-text-stroke:0.45px #080808">    }</span></div>
<div class="t" style="left:644.8px;top:856.45px;font-size:25.5px;color:#aeb3c2;font-weight:normal;font-family:'Liberation Mono';letter-spacing:-0.9px;">100</div>
<div class="t" style="left:644.8px;top:900.45px;font-size:25.5px;color:#aeb3c2;font-weight:normal;font-family:'Liberation Mono';letter-spacing:-0.9px;">101</div>
<div class="t" style="left:759.6px;top:900.07px;font-size:26px;color:#080808;font-weight:normal;font-family:'Liberation Mono';-webkit-text-stroke:0.45px currentColor;"><span style="color:#080808;-webkit-text-stroke:0.45px #080808">    </span><span style="color:#0033b3;-webkit-text-stroke:0.45px #0033b3">public</span><span style="color:#080808;-webkit-text-stroke:0.45px #080808"> </span><span style="color:#0033b3;-webkit-text-stroke:0.45px #0033b3">function</span><span style="color:#080808;-webkit-text-stroke:0.45px #080808"> </span><span style="color:#00627a;-webkit-text-stroke:0.45px #00627a">setTitle</span><span style="color:#080808;-webkit-text-stroke:0.45px #080808">(?</span><span style="color:#0033b3;-webkit-text-stroke:0.45px #0033b3">string</span><span style="color:#080808;-webkit-text-stroke:0.45px #080808"> </span><span style="color:#660e0e;-webkit-text-stroke:0.45px #660e0e">$title</span><span style="color:#080808;-webkit-text-stroke:0.45px #080808">): </span><span style="color:#0033b3;-webkit-text-stroke:0.45px #0033b3">void</span></div>
<div class="t" style="left:644.8px;top:944.45px;font-size:25.5px;color:#aeb3c2;font-weight:normal;font-family:'Liberation Mono';letter-spacing:-0.9px;">102</div>
<div class="t" style="left:759.6px;top:944.07px;font-size:26px;color:#080808;font-weight:normal;font-family:'Liberation Mono';-webkit-text-stroke:0.45px currentColor;"><span style="color:#080808;-webkit-text-stroke:0.45px #080808">    {</span></div>
<div class="t" style="left:644.8px;top:988.45px;font-size:25.5px;color:#aeb3c2;font-weight:normal;font-family:'Liberation Mono';letter-spacing:-0.9px;">103</div>
<div class="t" style="left:759.6px;top:988.07px;font-size:26px;color:#080808;font-weight:normal;font-family:'Liberation Mono';-webkit-text-stroke:0.45px currentColor;"><span style="color:#080808;-webkit-text-stroke:0.45px #080808">        </span><span style="color:#660e0e;-webkit-text-stroke:0.45px #660e0e">$this</span><span style="color:#080808;-webkit-text-stroke:0.45px #080808">-&gt;</span><span style="color:#871094;-webkit-text-stroke:0.45px #871094">title</span><span style="color:#080808;-webkit-text-stroke:0.45px #080808"> = </span><span style="color:#660e0e;-webkit-text-stroke:0.45px #660e0e">$title</span><span style="color:#080808;-webkit-text-stroke:0.45px #080808">;</span></div>
<div class="t" style="left:644.8px;top:1032.45px;font-size:25.5px;color:#aeb3c2;font-weight:normal;font-family:'Liberation Mono';letter-spacing:-0.9px;">104</div>
<div class="t" style="left:759.6px;top:1032.07px;font-size:26px;color:#080808;font-weight:normal;font-family:'Liberation Mono';-webkit-text-stroke:0.45px currentColor;"><span style="color:#080808;-webkit-text-stroke:0.45px #080808">    }</span></div>
<div class="t" style="left:644.8px;top:1076.45px;font-size:25.5px;color:#aeb3c2;font-weight:normal;font-family:'Liberation Mono';letter-spacing:-0.9px;">105</div>
<div class="b" style="left:818.5px;top:227.7px;width:2px;height:131px;background:#ebecf0"></div>
<div class="b" style="left:818.5px;top:535.7px;width:2px;height:43px;background:#ebecf0"></div>
<div class="b" style="left:818.5px;top:755.7px;width:2px;height:43px;background:#ebecf0"></div>
<div class="b" style="left:818.5px;top:975.7px;width:2px;height:43px;background:#ebecf0"></div>
<svg class="i" style="left:1543px;top:141px" width="25" height="24" viewBox="0 0 25 24" fill="none"><path d="M10.3 2.2a2.5 2.5 0 0 1 4.4 0l9.2 17.3A2.5 2.5 0 0 1 21.7 23H3.3a2.5 2.5 0 0 1-2.2-3.5z" fill="#f2c55c"/><path d="M12.5 7.5v7.5" stroke="#fff" stroke-width="2.8" stroke-linecap="round"/><circle cx="12.5" cy="18.8" r="1.6" fill="#fff"/></svg>
<div class="t" style="left:1574px;top:140.84px;font-size:25px;color:#5a5d63;font-weight:normal;font-family:'Liberation Sans';">3</div>
<svg class="i" style="left:1603px;top:141px" width="25" height="24" viewBox="0 0 25 24" fill="none"><path d="M10.3 2.2a2.5 2.5 0 0 1 4.4 0l9.2 17.3A2.5 2.5 0 0 1 21.7 23H3.3a2.5 2.5 0 0 1-2.2-3.5z" fill="#d9cfa9"/><path d="M12.5 7.5v7.5" stroke="#fff" stroke-width="2.8" stroke-linecap="round"/><circle cx="12.5" cy="18.8" r="1.6" fill="#fff"/></svg>
<div class="t" style="left:1634px;top:140.84px;font-size:25px;color:#5a5d63;font-weight:normal;font-family:'Liberation Sans';">5</div>
<svg class="i" style="left:1669px;top:148px" width="18" height="10" viewBox="0 0 18 10" fill="none"><path d="M1.5 8.5L9 1.5l7.5 7" stroke="#6c707e" stroke-width="2" stroke-linecap="round" stroke-linejoin="round"/></svg>
<svg class="i" style="left:1711px;top:149px" width="18" height="10" viewBox="0 0 18 10" fill="none"><path d="M1.5 1.5L9.0 8.5L16.5 1.5" stroke="#6c707e" stroke-width="2" stroke-linecap="round" stroke-linejoin="round"/></svg>
<div class="b" style="left:1716px;top:208px;width:28px;height:4px;background:#f2bf57"></div>
<div class="b" style="left:1716px;top:278px;width:28px;height:4px;background:#f2bf57"></div>
<div class="b" style="left:1716px;top:288px;width:28px;height:4px;background:#d9cfa9"></div>
<div class="b" style="left:1716px;top:454px;width:28px;height:4px;background:#d9cfa9"></div>
<div class="b" style="left:1716px;top:720px;width:28px;height:4px;background:#d9cfa9"></div>
<div class="b" style="left:1716px;top:896px;width:28px;height:4px;background:#d9cfa9"></div>
<div class="b" style="left:1716px;top:1016px;width:28px;height:4px;background:#d9cfa9"></div>
<div class="b" style="left:1724px;top:514px;width:14px;height:102px;border-radius:7px;background:#c9c9c9"></div>
<div class="t" style="left:646px;top:1119.64px;font-size:27px;color:#5e6270;font-weight:normal;font-family:'Liberation Sans';letter-spacing:0.9px;">\App\Entity</div>
<svg class="i" style="left:806.5px;top:1125.5px" width="8" height="14" viewBox="0 0 8 14" fill="none"><path d="M1.5 1.5L6.5 7l-5 5.5" stroke="#a8adbd" stroke-width="2" stroke-linecap="round" stroke-linejoin="round"/></svg>
<div class="t" style="left:832px;top:1119.64px;font-size:27px;color:#5e6270;font-weight:normal;font-family:'Liberation Sans';letter-spacing:0.3px;">Post</div>
<svg class="i" style="left:1764px;top:83px" width="28" height="32" viewBox="0 0 28 32" fill="none"><path d="M14 1.5a7.5 7.5 0 0 1 7.5 7.5v4.5a3 3 0 0 0 .4 1.5L26 23a1.2 1.2 0 0 1-1 1.8H3a1.2 1.2 0 0 1-1-1.8l4.1-8a3 3 0 0 0 .4-1.5V9A7.5 7.5 0 0 1 14 1.5z" stroke="#6c707e" stroke-width="2" stroke-linejoin="round"/><path d="M10.5 27.5h7a3.5 3.5 0 0 1-7 0z" fill="#6c707e"/></svg>
<svg class="i" style="left:1765px;top:148px" width="26" height="30" viewBox="0 0 26 30" fill="none"><ellipse cx="13" cy="5.5" rx="11.5" ry="4.5" stroke="#6c707e" stroke-width="2"/><path d="M1.5 5.5v19c0 2.5 5.1 4.5 11.5 4.5s11.5-2 11.5-4.5v-19M1.5 12c0 2.5 5.1 4.5 11.5 4.5s11.5-2 11.5-4.5M1.5 18c0 2.5 5.1 4.5 11.5 4.5s11.5-2 11.5-4.5" stroke="#6c707e" stroke-width="2"/></svg>
<div class="b" style="left:27.5px;top:1174px;width:16px;height:15px;border-radius:4px;background:#e7effd;border:2px solid #3574f0;box-sizing:border-box"></div>
<div class="t" style="left:52px;top:1169.04px;font-size:25px;color:#6c707e;font-weight:normal;font-family:'Liberation Sans';letter-spacing:0.62px;">phpstorm-demo</div>
<svg class="i" style="left:255px;top:1173px" width="10" height="16" viewBox="0 0 10 16" fill="none"><path d="M1.5 1.5L8.5 8l-7 6.5" stroke="#6c707e" stroke-width="2" stroke-linecap="round" stroke-linejoin="round"/></svg>
<svg class="i" style="left:339px;top:1173px" width="10" height="16" viewBox="0 0 10 16" fill="none"><path d="M1.5 1.5L8.5 8l-7 6.5" stroke="#6c707e" stroke-width="2" stroke-linecap="round" stroke-linejoin="round"/></svg>
<svg class="i" style="left:453px;top:1173px" width="10" height="16" viewBox="0 0 10 16" fill="none"><path d="M1.5 1.5L8.5 8l-7 6.5" stroke="#6c707e" stroke-width="2" stroke-linecap="round" stroke-linejoin="round"/></svg>
<svg class="i" style="left:643px;top:1173px" width="10" height="16" viewBox="0 0 10 16" fill="none"><path d="M1.5 1.5L8.5 8l-7 6.5" stroke="#6c707e" stroke-width="2" stroke-linecap="round" stroke-linejoin="round"/></svg>
<div class="t" style="left:283.5px;top:1169.04px;font-size:25px;color:#6c707e;font-weight:normal;font-family:'Liberation Sans';letter-spacing:0.5px;">src</div>
<div class="t" style="left:367.5px;top:1169.04px;font-size:25px;color:#6c707e;font-weight:normal;font-family:'Liberation Sans';letter-spacing:0.2px;">Entity</div>
<svg class="i" style="left:484px;top:1166px" width="28" height="28" viewBox="0 0 28 28" fill="none"><circle cx="14" cy="14" r="12.9" fill="#e7effd" stroke="#3574f0" stroke-width="2"/><path d="M19.2 10.4A6.2 6.2 0 1 0 19.2 17.6" stroke="#3574f0" stroke-width="2" stroke-linecap="round"/></svg>
<div class="t" style="left:521.5px;top:1169.04px;font-size:25px;color:#6c707e;font-weight:normal;font-family:'Liberation Sans';letter-spacing:0.3px;">Post.php</div>
<svg class="i" style="left:674px;top:1166px" width="28" height="28" viewBox="0 0 28 28" fill="none"><circle cx="14" cy="14" r="12.9" fill="#e7effd" stroke="#3574f0" stroke-width="2"/><path d="M19.2 10.4A6.2 6.2 0 1 0 19.2 17.6" stroke="#3574f0" stroke-width="2" stroke-linecap="round"/></svg>
<div class="t" style="left:711.5px;top:1169.04px;font-size:25px;color:#6c707e;font-weight:normal;font-family:'Liberation Sans';letter-spacing:-0.2px;">Post</div>
<div class="t" style="left:1323px;top:1166.84px;font-size:25px;color:#6c707e;font-weight:normal;font-family:'Liberation Sans';letter-spacing:-2px;">LF</div>
<div class="t" style="left:1382.5px;top:1166.84px;font-size:25px;color:#6c707e;font-weight:normal;font-family:'Liberation Sans';letter-spacing:0.4px;">UTF-8</div>
<div class="t" style="left:1490.5px;top:1169.14px;font-size:25px;color:#6c707e;font-weight:normal;font-family:'Liberation Sans';letter-spacing:0.3px;">4 spaces</div>
<svg class="i" style="left:1625px;top:1167px" width="26" height="28" viewBox="0 0 26 28" fill="none"><circle cx="5" cy="5" r="3.6" stroke="#6c707e" stroke-width="2"/><circle cx="18" cy="8.5" r="3.6" stroke="#6c707e" stroke-width="2"/><path d="M5 8.6V27M5 19h8a5 5 0 0 0 5-5v-1.9" stroke="#6c707e" stroke-width="2"/></svg>
<div class="b" style="left:1640px;top:1182px;width:14px;height:14px;border-radius:50%;background:#55a76a"></div>
<div class="t" style="left:1658px;top:1166.84px;font-size:25px;color:#6c707e;font-weight:normal;font-family:'Liberation Sans';letter-spacing:-0.3px;">main</div>
<svg class="i" style="left:1747px;top:1167px" width="28" height="26" viewBox="0 0 28 26" fill="none"><rect x="1.5" y="11" width="17" height="13" rx="2.5" stroke="#6c707e" stroke-width="2"/><path d="M10 15.5v4" stroke="#6c707e" stroke-width="2" stroke-linecap="round"/><path d="M15 11V7a5 5 0 0 1 10 0v3" stroke="#6c707e" stroke-width="2" stroke-linecap="round"/></svg>
</div>
</body></html>
